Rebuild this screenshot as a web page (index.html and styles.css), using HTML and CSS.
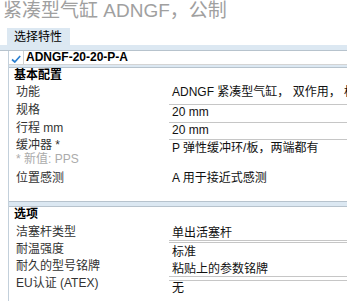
FILE: index.html
```html
<!DOCTYPE html>
<html lang="zh-CN">
<head>
  <meta charset="UTF-8" />
  <meta name="viewport" content="width=device-width, initial-scale=1" />
  <title>紧凑型气缸 ADNGF，公制</title>
  <link rel="stylesheet" href="styles.css">
</head>
<body>
  <div class="title">紧凑型气缸 ADNGF，公制</div>

  <div class="tabbar">
    <div class="tab">选择特性</div>
  </div>
  <div class="band"></div>

  <main class="content">
    <div class="code-row">
      <span class="check">
        <svg width="10" height="8" viewBox="0 0 10 8">
          <path d="M1 4.5 L3.8 7 L9.2 1" fill="none" stroke="#2a7fd0" stroke-width="1.7" />
        </svg>
      </span>
      <span class="code">ADNGF-20-20-P-A</span>
    </div>

    <section class="panel panel-basic">
      <h2 class="panel-title">基本配置</h2>
      <div class="row r-func">
        <div class="label">功能</div>
        <div class="value v-text">ADNGF 紧凑型气缸， 双作用， 标准</div>
      </div>
      <div class="row r-size">
        <div class="label">规格</div>
        <div class="value field-top">20 mm</div>
      </div>
      <div class="row r-stroke">
        <div class="label">行程 mm</div>
        <div class="value field-top">20 mm</div>
      </div>
      <div class="row r-cushion">
        <div class="label">缓冲器 *</div>
        <div class="value field-top pad1">P 弹性缓冲环/板，两端都有</div>
      </div>
      <div class="row r-note">
        <div class="label note">* 新值: PPS</div>
      </div>
      <div class="row r-sense">
        <div class="label">位置感测</div>
        <div class="value">A 用于接近式感测</div>
      </div>
    </section>

    <section class="panel panel-options">
      <h2 class="panel-title">选项</h2>
      <div class="row">
        <div class="label">洁塞杆类型</div>
        <div class="value field-bottom o1">单出活塞杆</div>
      </div>
      <div class="row">
        <div class="label">耐温强度</div>
        <div class="value field-top o2">标准</div>
      </div>
      <div class="row">
        <div class="label">耐久的型号铭牌</div>
        <div class="value field-bottom o3">粘贴上的参数铭牌</div>
      </div>
      <div class="row">
        <div class="label">EU认证 (ATEX)</div>
        <div class="value field-top o4">无</div>
      </div>
    </section>
  </main>
</body>
</html>
```

FILE: styles.css
```css
:root {
  --band: #dce8f2;
  --line: #b7c3cd;
  --field-line: #c6c6c6;
  --font: "Liberation Sans", "Noto Sans CJK SC", sans-serif;
}
body {
  margin: 0;
  width: 347px;
  height: 301px;
  overflow: hidden;
  font-family: var(--font);
  font-size: 12px;
  color: #222;
  background: #fff;
}
.title {
  height: 28px;
  line-height: 22px;
  padding-left: 3px;
  font-size: 19px;
  color: #a0a0a0;
  white-space: nowrap;
}
.tabbar {
  height: 17px;
}
.tab {
  width: 63px;
  height: 17px;
  margin-left: 7px;
  padding-left: 7px;
  box-sizing: border-box;
  line-height: 18px;
  background: var(--band);
  color: #000;
}
.band {
  height: 5px;
  background: var(--band);
  border-bottom: 1px solid var(--line);
}
.content {
  margin-left: 8px;
  border-left: 1px solid #c3d0db;
  background: var(--band);
}
.code-row {
  display: flex;
  align-items: center;
  height: 13px;
  background: #fff;
  border-bottom: 1px solid #d4d4d4;
  margin-bottom: 2px;
}
.check {
  width: 15px;
  height: 13px;
  display: flex;
  align-items: flex-end;
  justify-content: center;
  border-right: 1px solid #d0d0d0;
  box-sizing: border-box;
  padding-bottom: 1px;
}
.code {
  margin-left: 2px;
  font-weight: bold;
  color: #000;
  line-height: 13px;
}
.panel {
  background: #fff;
  border-top: 1px solid var(--line);
  border-bottom: 1px solid var(--line);
}
.panel-basic {
  height: 133px;
  margin-bottom: 4px;
}
.panel-options {
  height: 120px;
}
.panel-title {
  margin: 0;
  height: 16px;
  line-height: 15px;
  padding-left: 5px;
  font-size: 12px;
  font-weight: bold;
  color: #000;
}
.panel-options .panel-title {
  height: 17px;
}
.row {
  display: flex;
  align-items: flex-start;
  height: 17px;
}
.label {
  flex-shrink: 0;
  width: 160px;
  padding-left: 7px;
  box-sizing: border-box;
  line-height: 17px;
  color: #333;
  white-space: nowrap;
}
.note {
  color: #ababab;
  line-height: 13px;
}
.value {
  flex: 1;
  min-width: 0;
  padding-left: 3px;
  line-height: 14px;
  color: #111;
  white-space: nowrap;
}
.v-text {
  line-height: 17px;
  overflow: hidden;
}
.r-sense .value {
  line-height: 17px;
}
.field-top {
  margin-top: 2px;
  border-top: 1px solid var(--field-line);
}
.field-bottom {
  border-bottom: 1px solid var(--field-line);
}
.pad1 {
  padding-top: 1px;
}
.r-func,
.r-size {
  height: 18px;
}
.r-cushion {
  height: 16px;
}
.r-note {
  height: 13px;
  margin-bottom: 4px;
}
.r-sense {
  height: 18px;
}
.o1 {
  padding-top: 3px;
  line-height: 13px;
}
.o2 {
  margin-top: 1px;
  padding-top: 2px;
}
.o3 {
  padding-top: 4px;
}
.o4 {
  margin-top: 5px;
}
```
